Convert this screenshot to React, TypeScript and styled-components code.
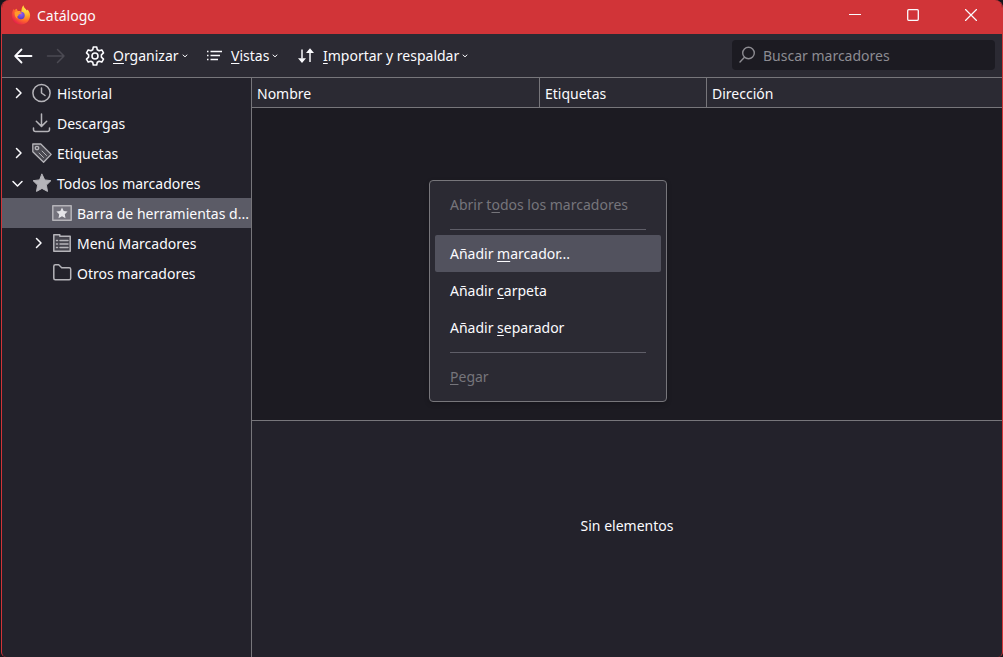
import React from 'react';
import styled, { createGlobalStyle } from 'styled-components';

const GlobalStyle = createGlobalStyle`
  *, *::before, *::after { box-sizing: border-box; }
  body {
    margin: 0;
    background: #17161c;
    color: #fbfbfe;
    font: 14px/20px 'Noto Sans', 'Segoe UI', sans-serif;
  }
  button, input { font: inherit; color: inherit; }
  button { background: none; border: 0; padding: 0; }
  svg { display: block; flex: none; }
`;

const line = '#77767b';

const Window = styled.div`
  display: flex;
  flex-direction: column;
  min-height: 100vh;
  margin-left: 1px;
  background: #23222b;
  border: solid #d13438;
  border-width: 0 1px;
  border-radius: 8px 8px 5px 5px;
  overflow: hidden;
`;

const TitleBar = styled.header`
  display: flex;
  align-items: center;
  height: 34px;
  padding: 0 2px 4px 9px;
  gap: 6px;
  background: #d13438;
`;

const Title = styled.h1`
  flex: 1;
  margin: 0;
  padding-top: 2px;
  font-size: 14px;
  font-weight: 400;
`;

const CaptionGroup = styled.div`
  display: flex;
`;

const CaptionButton = styled.button`
  display: flex;
  align-items: center;
  justify-content: center;
  width: 58px;
  height: 30px;
`;

const Toolbar = styled.div`
  display: flex;
  align-items: center;
  height: 44px;
  padding: 0 7px 0 11px;
  background: #2b2a33;
  border-bottom: 1px solid ${line};
`;

const NavButton = styled.button`
  display: flex;
  margin-right: 13px;
  &:disabled { color: #4b4a53; }
`;

const ToolButton = styled.button<{ $width: number }>`
  display: flex;
  align-items: center;
  gap: 8px;
  width: ${(p) => p.$width}px;
  margin-left: 6px;
  white-space: nowrap;
`;

const ToolLabel = styled.span`
  display: flex;
  align-items: center;
  gap: 3px;
`;

const Key = styled.span`
  text-decoration: underline;
  text-decoration-thickness: 1px;
  text-underline-offset: 2px;
`;

const SearchBox = styled.label`
  display: flex;
  align-items: center;
  gap: 8px;
  width: 263px;
  height: 30px;
  margin: 0 0 2px auto;
  padding: 0 7px;
  border-radius: 4px;
  background: #1c1b22;
  color: #8d8c92;
`;

const SearchInput = styled.input`
  flex: 1;
  min-width: 0;
  padding: 2px 0 0;
  border: 0;
  outline: 0;
  background: none;
  &::placeholder { color: #8d8c92; opacity: 1; }
`;

const Body = styled.div`
  flex: 1;
  display: flex;
`;

const Sidebar = styled.nav`
  width: 250px;
  flex: none;
  border-right: 1px solid ${line};
`;

const Tree = styled.ul`
  list-style: none;
  margin: 0;
  padding: 0;
`;

const TreeRow = styled.button<{ $level: number; $selected?: boolean }>`
  display: flex;
  align-items: center;
  width: 100%;
  height: 30px;
  padding-left: ${(p) => 8 + p.$level * 20}px;
  background: ${(p) => (p.$selected ? '#5b5b66' : 'transparent')};
  text-align: left;
`;

const Twisty = styled.span`
  width: 22px;
  flex: none;
`;

const TreeIcon = styled.span`
  margin-right: 5px;
  color: #b5b4b9;
`;

const TreeLabel = styled.span`
  padding-top: 2px;
  white-space: nowrap;
`;

const Main = styled.main`
  flex: 1;
  min-width: 0;
  display: flex;
  flex-direction: column;
`;

const ListPane = styled.section`
  position: relative;
  flex: 343 1 0;
  background: #1c1b22;
  border-bottom: 1px solid ${line};
`;

const ListTable = styled.table`
  width: 100%;
  table-layout: fixed;
  border-collapse: separate;
  border-spacing: 0;
`;

const HeaderCell = styled.th<{ $width?: string }>`
  width: ${(p) => p.$width ?? 'auto'};
  height: 30px;
  padding: 2px 5px 0;
  background: #2b2a33;
  border-bottom: 1px solid ${line};
  border-right: 1px solid ${line};
  font-weight: 400;
  text-align: left;
  &:last-child { border-right: 0; }
`;

const Details = styled.section`
  flex: 236 1 0;
`;

const EmptyNote = styled.p`
  margin: 0;
  padding-top: 95px;
  text-align: center;
`;

const Menu = styled.div`
  position: absolute;
  left: 177px;
  top: 102px;
  width: 238px;
  padding: 5px 5px 6px;
  border: 1px solid ${line};
  border-radius: 4px;
  background: #2b2a33;
  box-shadow: 0 2px 5px rgba(0, 0, 0, 0.2);
`;

const MenuItem = styled.button<{ $active?: boolean }>`
  display: block;
  width: 100%;
  height: 37px;
  padding: 1px 15px 0;
  border-radius: 2px;
  background: ${(p) => (p.$active ? '#52525e' : 'transparent')};
  text-align: left;
  white-space: nowrap;
  &:disabled { color: #76757b; }
`;

const MenuSeparator = styled.hr`
  height: 1px;
  margin: 6px 15px 5px;
  border: 0;
  background: #5f5e68;
`;

const stroke = { fill: 'none', stroke: 'currentColor', strokeLinecap: 'round', strokeLinejoin: 'round' } as const;

const Firefox = () => (
  <svg width="20" height="20" viewBox="0 0 20 20">
    <defs>
      <radialGradient id="fire" cx="0.8" cy="0.15" r="1">
        <stop offset="0" stopColor="#fff44f" />
        <stop offset="0.35" stopColor="#ffb52c" />
        <stop offset="0.65" stopColor="#ff6a2b" />
        <stop offset="1" stopColor="#e3174f" />
      </radialGradient>
      <radialGradient id="globe" cx="0.5" cy="0.3" r="0.8">
        <stop offset="0" stopColor="#9a5cf5" />
        <stop offset="1" stopColor="#4a3bbd" />
      </radialGradient>
    </defs>
    <path fill="url(#fire)" d="M12.6.3c.1 2 1 2.600 2 3.600.5.5.8 1 1.100 1.600.5-.2.7-.6.7-1.100 1.700 1.600 2.700 3.700 2.700 6.100 0 5-4 9-9.100 9S.7 15.600.7 10.500c0-3.200 1.200-5.500 2.300-6.700 0 .7.1 1.100.3 1.600.7-1 1.700-1.500 2.700-1.700-.1.9.2 1.700.8 2.300 1.600-.2 2.800.3 3.500 1 .2-3 .6-5 2.300-6.700z" />
    <circle cx="10" cy="10.500" r="3.700" fill="url(#globe)" />
    <path fill="#ff9a2a" d="M3.800 7.100c1.600-.9 3.500-.8 5 .1l1.900.5c-.3 1-1.300 1.300-2.300 1.500-1 .3-1.300.9-1 1.800-1.300-.3-2 1.200-.7 3-2.300-1-3.500-4-2.900-6.900z" />
  </svg>
);

const Back = () => (
  <svg width="20" height="18" viewBox="0 0 20 18" {...stroke} strokeWidth="1.800">
    <path d="M18.500 9H2.500M8.500 2.500 2.200 9l6.300 6.500" />
  </svg>
);

const Forward = () => (
  <svg width="20" height="18" viewBox="0 0 20 18" {...stroke} strokeWidth="1.500">
    <path d="M1.500 9H18M11.500 2.500 18 9l-6.500 6.500" />
  </svg>
);

const Gear = () => (
  <svg width="20" height="20" viewBox="0 0 20 20" {...stroke} strokeWidth="1.600">
    <path d="M8.300 1h3.400l.6 2.800 1.800 1 2.700-.9 1.700 3-2.100 1.900v2.400l2.100 1.900-1.700 3-2.700-.9-1.800 1-.6 2.800H8.300l-.6-2.800-1.800-1-2.700.9-1.700-3 2.100-1.900V8.800L1.500 6.900l1.700-3 2.700.9 1.800-1z" />
    <circle cx="10" cy="10" r="3" />
  </svg>
);

const Views = () => (
  <svg width="17" height="14" viewBox="0 0 17 14" {...stroke} strokeLinecap="butt" strokeWidth="1.400">
    <path d="M1 2.500h1.500M1 6.500h1.500M1 10.500h1.500M4.500 2.500H16M4.500 6.500H14M4.500 10.500H12" />
  </svg>
);

const Transfer = () => (
  <svg width="18" height="16" viewBox="0 0 18 16">
    <path fill="#c4c3c8" d="M4 1.500h2v9H4zM12 5h2v9h-2z" />
    <path fill="currentColor" d="M1 10.300h8L5 15zM9 5h8l-4-4.700z" />
  </svg>
);

const SmallCaret = () => (
  <svg width="6" height="5" viewBox="0 0 6 5" {...stroke} strokeWidth="1">
    <path d="M1 2 3 3.800 5 2" />
  </svg>
);

const Search = () => (
  <svg width="16" height="18" viewBox="0 0 16 18" {...stroke} strokeWidth="1.400">
    <circle cx="9.500" cy="7" r="5.800" />
    <path d="M5.500 11.300 1 16" />
  </svg>
);

const Chevron = ({ open }: { open?: boolean }) => (
  <svg width="16" height="16" viewBox="0 0 16 16" {...stroke} strokeWidth="1.500">
    <path d={open ? 'M3 6.500 7.500 11 12 6.500' : 'M6.500 3.500 11 8l-4.500 4.500'} />
  </svg>
);

const icons = {
  history: (
    <>
      <circle cx="9.500" cy="10" r="8.600" />
      <path d="M9.500 5v5l3.500 2.500" />
    </>
  ),
  downloads: <path d="M9.500 1v12M4.300 8.200l5.200 5.200 5.200-5.200M1.500 15v1.500q0 2 2 2h12q2 0 2-2V15" />,
  tags: (
    <>
      <path fill="#4a4951" strokeWidth="1.300" d="M.8 1h8l10.400 10.400-7.600 7.800L.8 8.700z" />
      <circle cx="5" cy="5" r="1.700" strokeWidth="1.300" />
      <path strokeWidth="1" d="m7 10 4.500 4.500M10 8l4.500 4.500" />
    </>
  ),
  star: (
    <path fill="currentColor" strokeWidth="1" d="m10 1.200 2.700 5.700 6.200.8-4.500 4.400 1.100 6.300-5.500-3-5.500 3 1.100-6.300L1.100 7.700l6.200-.8z" />
  ),
  toolbar: (
    <>
      <path fill="#74737d" d="M.8 2.800h18.400v14.400H.8z" />
      <path fill="#e4e4e8" stroke="none" d="m10 4.500 1.700 3.600 3.900.5-2.800 2.700.7 3.900-3.500-1.900-3.500 1.900.7-3.900-2.800-2.700 3.900-.5z" />
    </>
  ),
  menu: (
    <>
      <path fill="#45444d" d="M1.800 1.800h6v1.500h10.400v15H1.800z" />
      <path d="M4.500 7.500h1M8 7.500h8M4.500 11h1M8 11h8M4.500 14.500h1M8 14.500h8" />
    </>
  ),
  folder: <path d="M1.800 3.300q0-1.500 1.500-1.500h3.400l3 3h7.500q1.500 0 1.500 1.500v9q0 1.500-1.500 1.500H3.300q-1.500 0-1.500-1.500z" />,
};

type Row = { label: string; icon: keyof typeof icons; level: number; open?: boolean; selected?: boolean };

const rows: Row[] = [
  { label: 'Historial', icon: 'history', level: 0, open: false },
  { label: 'Descargas', icon: 'downloads', level: 0 },
  { label: 'Etiquetas', icon: 'tags', level: 0, open: false },
  { label: 'Todos los marcadores', icon: 'star', level: 0, open: true },
  { label: 'Barra de herramientas d...', icon: 'toolbar', level: 1, selected: true },
  { label: 'Menú Marcadores', icon: 'menu', level: 1, open: false },
  { label: 'Otros marcadores', icon: 'folder', level: 1 },
];

export default function App() {
  return (
    <>
      <GlobalStyle />
      <Window>
        <TitleBar>
          <Firefox />
          <Title>Catálogo</Title>
          <CaptionGroup>
            <CaptionButton aria-label="Minimizar">
              <svg width="12" height="12" viewBox="0 0 12 12" {...stroke}><path d="M0 5.500h12" /></svg>
            </CaptionButton>
            <CaptionButton aria-label="Maximizar">
              <svg width="12" height="12" viewBox="0 0 12 12" {...stroke} strokeWidth="1.300"><rect x=".7" y=".7" width="10.600" height="10.600" rx="1" /></svg>
            </CaptionButton>
            <CaptionButton aria-label="Cerrar">
              <svg width="12" height="12" viewBox="0 0 12 12" {...stroke} strokeWidth="1.200"><path d="m.5.5 11 11M11.500.5l-11 11" /></svg>
            </CaptionButton>
          </CaptionGroup>
        </TitleBar>

        <Toolbar>
          <NavButton aria-label="Atrás"><Back /></NavButton>
          <NavButton aria-label="Adelante" disabled><Forward /></NavButton>
          <ToolButton $width={115}>
            <Gear />
            <ToolLabel><span><Key>O</Key>rganizar</span><SmallCaret /></ToolLabel>
          </ToolButton>
          <ToolButton $width={85}>
            <Views />
            <ToolLabel><span><Key>V</Key>istas</span><SmallCaret /></ToolLabel>
          </ToolButton>
          <ToolButton $width={175}>
            <Transfer />
            <ToolLabel><span><Key>I</Key>mportar y respaldar</span><SmallCaret /></ToolLabel>
          </ToolButton>
          <SearchBox>
            <Search />
            <SearchInput type="text" placeholder="Buscar marcadores" aria-label="Buscar marcadores" />
          </SearchBox>
        </Toolbar>

        <Body>
          <Sidebar>
            <Tree>
              {rows.map((row) => (
                <li key={row.label}>
                  <TreeRow $level={row.level} $selected={row.selected} aria-expanded={row.open}>
                    <Twisty>{row.open !== undefined && <Chevron open={row.open} />}</Twisty>
                    <TreeIcon>
                      <svg width="20" height="20" viewBox="0 0 20 20" {...stroke} strokeWidth="1.500">{icons[row.icon]}</svg>
                    </TreeIcon>
                    <TreeLabel>{row.label}</TreeLabel>
                  </TreeRow>
                </li>
              ))}
            </Tree>
          </Sidebar>

          <Main>
            <ListPane>
              <ListTable>
                <thead>
                  <tr>
                    <HeaderCell $width="288px">Nombre</HeaderCell>
                    <HeaderCell $width="167px">Etiquetas</HeaderCell>
                    <HeaderCell>Dirección</HeaderCell>
                  </tr>
                </thead>
              </ListTable>
              <Menu>
                <MenuItem disabled>Abrir t<Key>o</Key>dos los marcadores</MenuItem>
                <MenuSeparator />
                <MenuItem $active>Añadir <Key>m</Key>arcador...</MenuItem>
                <MenuItem>Añadir <Key>c</Key>arpeta</MenuItem>
                <MenuItem>Añadir <Key>s</Key>eparador</MenuItem>
                <MenuSeparator />
                <MenuItem disabled><Key>P</Key>egar</MenuItem>
              </Menu>
            </ListPane>
            <Details><EmptyNote>Sin elementos</EmptyNote></Details>
          </Main>
        </Body>
      </Window>
    </>
  );
}
